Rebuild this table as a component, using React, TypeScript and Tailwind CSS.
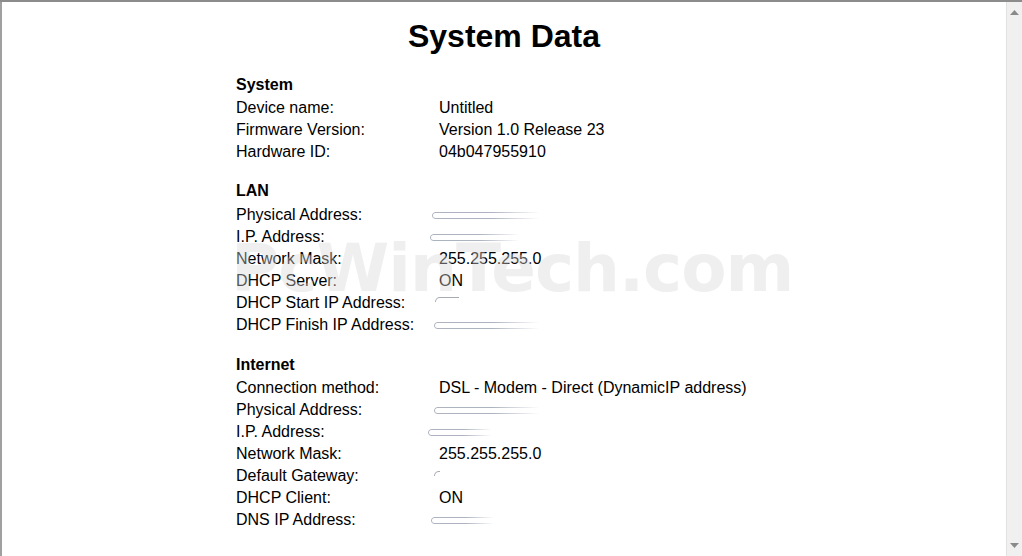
import React from "react";

type Row = { label: string; value?: string; smudge?: { w: number; dx: number; dy?: number; small?: boolean } };

const sections: { title: string; head: string; rows: Row[] }[] = [
  {
    title: "System",
    head: "h-[23px]",
    rows: [
      { label: "Device name:", value: "Untitled" },
      { label: "Firmware Version:", value: "Version 1.0 Release 23" },
      { label: "Hardware ID:", value: "04b047955910" },
    ],
  },
  {
    title: "LAN",
    head: "h-[24px]",
    rows: [
      { label: "Physical Address:", smudge: { w: 108, dx: -7 } },
      { label: "I.P. Address:", smudge: { w: 90, dx: -9 } },
      { label: "Network Mask:", value: "255.255.255.0" },
      { label: "DHCP Server:", value: "ON" },
      { label: "DHCP Start IP Address:", smudge: { w: 24, dx: -4, dy: -3, small: true } },
      { label: "DHCP Finish IP Address:", smudge: { w: 106, dx: -5 } },
    ],
  },
  {
    title: "Internet",
    head: "h-[23px] mt-[1px]",
    rows: [
      { label: "Connection method:", value: "DSL - Modem - Direct (DynamicIP address)" },
      { label: "Physical Address:", smudge: { w: 106, dx: -5 } },
      { label: "I.P. Address:", smudge: { w: 64, dx: -11 } },
      { label: "Network Mask:", value: "255.255.255.0" },
      { label: "Default Gateway:", smudge: { w: 6, dx: -5, dy: -2, small: true } },
      { label: "DHCP Client:", value: "ON" },
      { label: "DNS IP Address:", smudge: { w: 63, dx: -8 } },
    ],
  },
];

function Smudge({ w, dx, dy = 0, small }: { w: number; dx: number; dy?: number; small?: boolean }) {
  if (small) {
    return (
      <div className="relative h-[22px]">
        <div
          className="absolute top-[8px] h-[5px] rounded-tl-full border-l border-t border-gray-500/60 blur-[0.4px]"
          style={{ width: w, left: dx, marginTop: dy }}
        />
      </div>
    );
  }
  return (
    <div className="relative h-[22px]">
      <div
        className="absolute top-[8px] h-[7px] rounded-l-full border border-r-0 border-gray-400/80 blur-[0.5px] [mask-image:linear-gradient(to_right,black_55%,transparent)]"
        style={{ width: w, left: dx, marginTop: dy }}
      />
    </div>
  );
}

export default function App() {
  return (
    <div className="flex h-[556px] w-[1022px] flex-col overflow-hidden bg-white font-['Liberation_Sans',Arial,sans-serif] text-black">
      <div className="h-[2px] w-full bg-[#8c8c8c]" />
      <div className="flex flex-1">
        <div className="w-[2px] bg-[#a0a0a0]" />
        <div className="relative flex-1">
          <h1 className="mt-[16px] text-center text-[32px] font-bold leading-[37px]">System Data</h1>
          <div className="ml-[234px] mt-[19px] flex flex-col gap-[17px] text-[16px] leading-[22px]">
            {sections.map((s) => (
              <div key={s.title} className="flex flex-col">
                <div className={`${s.head} font-bold`}>{s.title}</div>
                {s.rows.map((r, i) => (
                  <div key={i} className="flex h-[22px]">
                    <div className="w-[203px] shrink-0">{r.label}</div>
                    <div className="flex-1">
                      {r.value ? r.value : r.smudge ? <Smudge {...r.smudge} /> : null}
                    </div>
                  </div>
                ))}
              </div>
            ))}
          </div>
          <div className="pointer-events-none absolute left-[229px] top-[234px] select-none font-['DejaVu_Sans',Verdana,sans-serif] text-[66px] font-bold leading-[66px] tracking-[-1px] text-[rgba(215,215,215,0.4)]">
            PcWinTech.com
          </div>
        </div>
        <div className="flex w-[16px] flex-col items-center justify-between border-l border-[#e2e2e2] bg-[#f0f0f0] py-[8px]">
          <svg width="9" height="5" viewBox="0 0 9 5">
            <path d="M4.5 0 L9 5 L0 5 Z" fill="#8a8a8a" />
          </svg>
          <svg width="9" height="5" viewBox="0 0 9 5">
            <path d="M0 0 L9 0 L4.5 5 Z" fill="#8a8a8a" />
          </svg>
        </div>
      </div>
    </div>
  );
}
